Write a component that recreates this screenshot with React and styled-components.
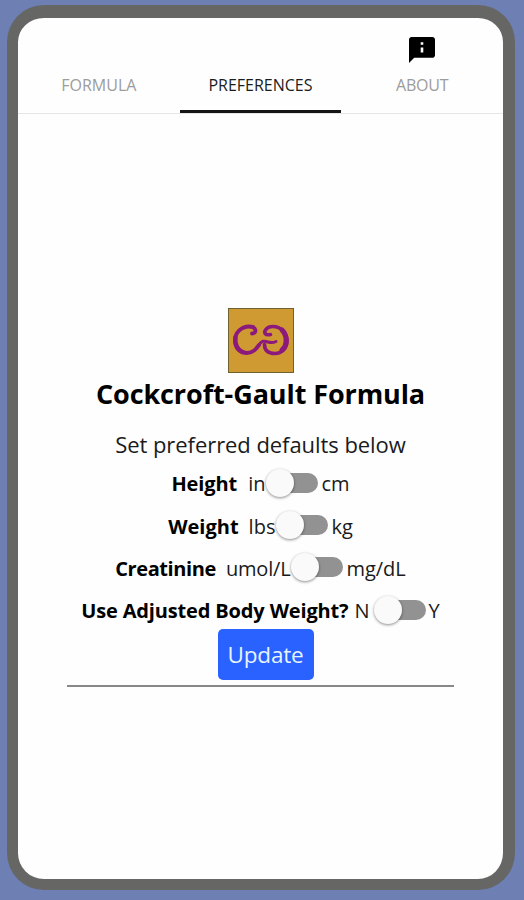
import React, { useState } from 'react';
import styled, { createGlobalStyle } from 'styled-components';

const GlobalStyle = createGlobalStyle`
  * {
    box-sizing: border-box;
  }

  body {
    margin: 0;
    background-color: #6d7fb3;
    font-family: 'Open Sans', 'Noto Sans', sans-serif;
    color: #1a1a1a;
  }
`;

// Device frame
const Page = styled.div`
  height: 900px;
  padding: 5px 9px 10px 7px;
  background-color: #6d7fb3;
`;

const Phone = styled.div`
  display: flex;
  flex-direction: column;
  height: 885px;
  border: solid #666765;
  border-width: 13px 12px 11px 11px;
  border-radius: 37px;
  background-color: #fefefe;
`;

// Tabs
const TabBar = styled.nav`
  display: grid;
  grid-template-columns: repeat(3, 1fr);
  height: 96px;
  border-bottom: 1px solid #e6e6e6;
`;

const Tab = styled.button`
  display: flex;
  flex-direction: column;
  align-items: center;
  justify-content: flex-end;
  gap: 12px;
  height: 95px;
  padding: 0 0 15px;
  border: none;
  border-bottom: 3px solid ${(props) => (props.$active ? '#151515' : 'transparent')};
  background: none;
  color: ${(props) => (props.$active ? '#1c1c1c' : '#9c9c9c')};
  font-family: inherit;
  font-size: 16px;
  line-height: 20px;
  letter-spacing: ${(props) => props.$spacing}px;
  cursor: pointer;
`;

const Content = styled.main`
  display: flex;
  flex-direction: column;
  align-items: center;
  padding-top: 194px;
`;

const Logo = styled.svg`
  display: block;
  width: 66px;
  height: 65px;
`;

const Title = styled.h1`
  margin: 2px 0 0;
  color: #000;
  font-size: 27px;
  font-weight: 700;
  line-height: 38px;
  letter-spacing: -0.1px;
`;

const Subtitle = styled.p`
  margin: 16px 0 4px;
  font-size: 22px;
  line-height: 30px;
  letter-spacing: -0.06px;
`;

// Preference rows
const Row = styled.div`
  display: flex;
  align-items: center;
  height: 42.4px;
  font-size: 20px;
  line-height: 28px;
  white-space: pre;
`;

const Label = styled.span`
  margin-right: ${(props) => props.$gap}px;
  color: #000;
  font-weight: 700;
  letter-spacing: ${(props) => props.$spacing}px;
`;

const Unit = styled.span`
  letter-spacing: ${(props) => props.$spacing || 0}px;
`;

const Track = styled.button`
  display: flex;
  align-items: center;
  justify-content: ${(props) => (props.$on ? 'flex-end' : 'flex-start')};
  width: 48px;
  height: 20px;
  margin: 0 3px 3px 5px;
  padding: 0;
  border: none;
  border-radius: 10px;
  background-color: #929292;
  cursor: pointer;
`;

const Thumb = styled.span`
  flex: none;
  width: 28px;
  height: 28px;
  margin-left: -4px;
  border-radius: 50%;
  background-color: #fafafa;
  box-shadow: 0 1px 3px rgba(0, 0, 0, 0.45);
`;

const UpdateButton = styled.button`
  width: 96px;
  height: 51px;
  margin: -4px 0 0 10px;
  padding: 0;
  border: none;
  border-radius: 5px;
  background-color: #2962ff;
  color: #e6f4ff;
  font-family: inherit;
  font-size: 22.5px;
  line-height: 51px;
  letter-spacing: -0.2px;
  cursor: pointer;
`;

const Divider = styled.hr`
  width: 387px;
  height: 2px;
  margin: 5px 0 0;
  border: none;
  background-color: #888;
`;

const AboutIcon = () => (
  <svg width="26" height="26" viewBox="2 2 20 20" fill="#000">
    <path d="M20 2H4c-1.1 0-1.99.9-1.99 2L2 22l4-4h14c1.1 0 2-.9 2-2V4c0-1.1-.9-2-2-2zm-7 12h-2v-4h2v4zm0-6h-2V6h2v2z" />
  </svg>
);

const LogoMark = () => (
  <Logo viewBox="0 0 66 65" fill="none">
    <rect x="0.5" y="0.5" width="65" height="64" fill="#cf9a32" stroke="#6f6231" />
    <g stroke="#8b1a7c" strokeLinecap="round" strokeLinejoin="round">
      <path d="M24 25.500C29 25.500 29 18.500 21 18.500 13 18.500 7 25 7 32.500 7 40 12 45 19 45c6 0 9-4 12-8" strokeWidth="3.800" />
      <path d="M7.500 29c-1 7 2 13 7 15" strokeWidth="4.400" />
      <path d="M42.500 26.500C36.500 27.500 36 24.500 37.500 22 39 19.500 42 18.500 45 18.500 53 18.500 59 25 59 32.500 59 40 54 45.500 47 45.500 40 45.500 36.500 42 36.500 36.500" strokeWidth="3.600" />
      <path d="M54 22c5 5 6 15 0 20" strokeWidth="5" />
      <path d="M30.500 37.500C33.500 32.500 36 32.500 40 34c3.500 1 6 .5 8-.5" strokeWidth="3" />
    </g>
  </Logo>
);

const tabs = [
  { name: 'FORMULA', spacing: 0 },
  { name: 'PREFERENCES', spacing: 0 },
  { name: 'ABOUT', spacing: -0.2, icon: <AboutIcon /> },
];

const preferences = [
  { label: 'Height', off: 'in', on: 'cm', gap: 11, spacing: -0.1 },
  { label: 'Weight', off: 'lbs', on: 'kg', gap: 10, spacing: 0 },
  { label: 'Creatinine', off: 'umol/L', on: 'mg/dL', gap: 10, spacing: -0.4, offSpacing: -0.2, onSpacing: 0 },
  { label: 'Use Adjusted Body Weight?', off: 'N', on: 'Y', gap: 6, spacing: -0.15, offSpacing: 3 },
];

const Preference = ({ label, off, on, gap, spacing, offSpacing, onSpacing }) => {
  const [checked, setChecked] = useState(false);

  return (
    <Row>
      <Label $gap={gap} $spacing={spacing}>{label}</Label>
      <Unit $spacing={offSpacing}>{off}</Unit>
      <Track
        role="switch"
        aria-label={label}
        aria-checked={checked}
        $on={checked}
        onClick={() => setChecked(!checked)}
      >
        <Thumb />
      </Track>
      <Unit $spacing={onSpacing}>{on}</Unit>
    </Row>
  );
};

const App = () => {
  const [activeTab, setActiveTab] = useState('PREFERENCES');

  return (
    <Page>
      <GlobalStyle />
      <Phone>
        <TabBar>
          {tabs.map((tab) => (
            <Tab
              key={tab.name}
              $active={tab.name === activeTab}
              $spacing={tab.spacing}
              onClick={() => setActiveTab(tab.name)}
            >
              {tab.icon}
              {tab.name}
            </Tab>
          ))}
        </TabBar>
        <Content>
          <LogoMark />
          <Title>Cockcroft-Gault Formula</Title>
          <Subtitle>Set preferred defaults below</Subtitle>
          {preferences.map((item) => (
            <Preference key={item.label} {...item} />
          ))}
          <UpdateButton>Update</UpdateButton>
          <Divider />
        </Content>
      </Phone>
    </Page>
  );
};

export default App;
